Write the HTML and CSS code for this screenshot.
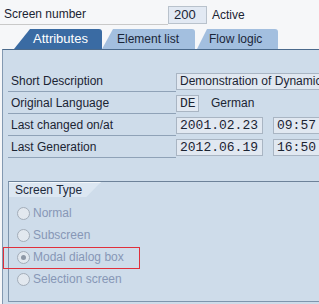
FILE: index.html
```html
<!DOCTYPE html>
<html>
<head>
<meta charset="utf-8">
<link rel="stylesheet" href="styles.css">
</head>
<body>
<div class="header">
  <div class="hlabel">Screen number</div>
  <div class="hfield">200</div>
  <div class="htext">Active</div>
</div>
<div class="tabs">
  <div class="tab active">Attributes</div>
  <div class="tab t2">Element list</div>
  <div class="tab t3">Flow logic</div>
</div>
<div class="panel">
  <div class="rows">
    <div class="row">
      <div class="label">Short Description</div>
      <div class="field wide">Demonstration of Dynamic</div>
    </div>
    <div class="row">
      <div class="label">Original Language</div>
      <div class="field mono lang">DE</div>
      <div class="ftext">German</div>
    </div>
    <div class="row">
      <div class="label">Last changed on/at</div>
      <div class="field mono date">2001.02.23</div>
      <div class="field mono time">09:57</div>
    </div>
    <div class="row">
      <div class="label">Last Generation</div>
      <div class="field mono date">2012.06.19</div>
      <div class="field mono time">16:50</div>
    </div>
  </div>
  <div class="group">
    <div class="gtitle">Screen Type</div>
    <div class="radios">
      <div class="radio"><span class="dot"></span>Normal</div>
      <div class="radio"><span class="dot"></span>Subscreen</div>
      <div class="radio"><span class="dot on"></span>Modal dialog box</div>
      <div class="radio"><span class="dot"></span>Selection screen</div>
    </div>
    <div class="mark"></div>
  </div>
</div>
</body>
</html>
```

FILE: styles.css
```css
html, body {
  margin: 0;
  padding: 0;
  width: 319px;
  height: 304px;
  overflow: hidden;
  background: #f6f7f9;
  font-family: "Liberation Sans", Arial, sans-serif;
  font-size: 12px;
  color: #1b2433;
}

.header {
  display: flex;
  align-items: flex-start;
  padding-top: 6px;
  height: 19px;
}

.hlabel {
  width: 164px;
  padding-left: 4px;
  height: 18px;
  line-height: 17px;
  border-bottom: 1px solid #c9c9c9;
}

.hfield {
  box-sizing: border-box;
  width: 39px;
  height: 18px;
  line-height: 16px;
  padding-left: 5px;
  background: #e2e9f3;
  border: 1px solid #b9c2cc;
  font-size: 13px;
}

.htext {
  margin-left: 5px;
  line-height: 18px;
}

.tabs {
  display: flex;
  height: 20px;
  margin-top: 4px;
  padding-left: 14px;
  position: relative;
  z-index: 1;
}

.tab {
  box-sizing: border-box;
  height: 20px;
  line-height: 20px;
  background: #a3bfdf;
  color: #1a2538;
  border-top-right-radius: 3px;
}

.tab.active {
  width: 88px;
  padding-left: 19px;
  background: #3a6ba3;
  color: #ffffff;
  font-size: 13px;
  clip-path: polygon(16px 0, 100% 0, 100% 100%, 0 100%);
}

.tab.t2 {
  width: 93px;
  padding-left: 15px;
  clip-path: polygon(11px 0, 100% 0, 100% 100%, 0 100%);
}

.tab.t3 {
  width: 81px;
  margin-left: 2px;
  padding-left: 12px;
  clip-path: polygon(10px 0, 100% 0, 100% 100%, 0 100%);
}

.panel {
  margin-left: 2px;
  height: 255px;
  background: #cedcea;
  border-top: 1px solid #4b6a8c;
  border-left: 1px solid #8399b1;
  box-sizing: border-box;
  padding-top: 20px;
  padding-left: 5px;
}

.rows {
  display: flex;
  flex-direction: column;
}

.row {
  display: flex;
  align-items: flex-end;
  height: 22px;
}

.label {
  box-sizing: border-box;
  width: 168px;
  flex: none;
  height: 22px;
  line-height: 22px;
  padding-left: 3px;
  border-bottom: 1px solid #8fa2b7;
}

.field {
  box-sizing: border-box;
  flex: none;
  height: 17px;
  line-height: 15px;
  margin-bottom: 2px;
  background: #e1e8f1;
  border: 1px solid #a9b5c3;
  padding-left: 3px;
  white-space: nowrap;
  overflow: hidden;
}

.field.wide {
  width: 150px;
}

.mono {
  font-family: "Liberation Mono", "DejaVu Sans Mono", monospace;
  font-size: 13px;
}

.field.lang {
  width: 23px;
}

.ftext {
  margin-left: 12px;
  margin-bottom: 2px;
  line-height: 17px;
}

.field.date {
  width: 87px;
}

.field.time {
  width: 60px;
  margin-left: 10px;
}

.group {
  position: relative;
  margin-top: 23px;
  height: 121px;
  box-sizing: border-box;
  border-top: 1px solid #6d8299;
  border-left: 1px solid #7f95ad;
  border-bottom: 1px solid #7f95ad;
}

.gtitle {
  width: 92px;
  height: 15px;
  line-height: 15px;
  padding-left: 6px;
  box-sizing: border-box;
  background: #dce7f2;
  border-top: 1px solid #f2f6fa;
  clip-path: polygon(0 0, 100% 0, 84% 100%, 0 100%);
  color: #1e2a3c;
}

.radios {
  display: flex;
  flex-direction: column;
  margin-top: 5px;
}

.radio {
  display: flex;
  align-items: center;
  height: 22px;
  padding-left: 8px;
  color: #8797b6;
  font-size: 12px;
}

.dot {
  box-sizing: border-box;
  width: 13px;
  height: 13px;
  border-radius: 50%;
  border: 1px solid #a3adb9;
  background: #e2e8ef;
  margin-right: 3px;
  position: relative;
}

.dot.on::after {
  content: "";
  position: absolute;
  left: 3px;
  top: 3px;
  width: 5px;
  height: 5px;
  border-radius: 50%;
  background: #8e98a6;
}

.mark {
  position: absolute;
  left: -6px;
  top: 65px;
  width: 137px;
  height: 22px;
  box-sizing: border-box;
  border: 1px solid #e0303c;
}
```
